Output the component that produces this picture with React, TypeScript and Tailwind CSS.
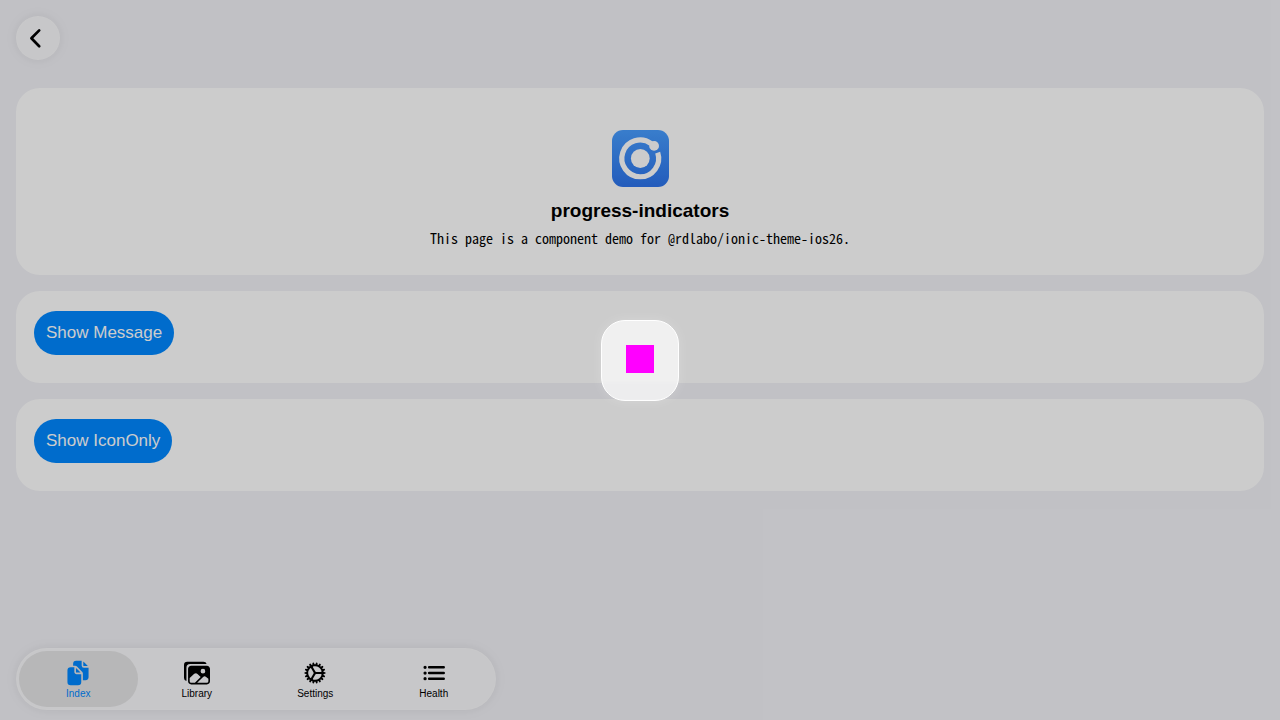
import type { ComponentType } from "react";
import { IoCog, IoDocuments, IoImages, IoList } from "react-icons/io5";

type Tab = {
  label: string;
  Icon: ComponentType<{ className?: string }>;
};

const tabs: Tab[] = [
  { label: "Index", Icon: IoDocuments },
  { label: "Library", Icon: IoImages },
  { label: "Settings", Icon: IoCog },
  { label: "Health", Icon: IoList },
];

const actions = ["Show Message", "Show IconOnly"];

function IonicLogo() {
  return (
    <svg viewBox="0 0 57 57" className="size-[57px]" role="img" aria-label="Ionic">
      <defs>
        <linearGradient id="logo-fill" x1="0" y1="0" x2="0" y2="1">
          <stop offset="0" stopColor="#479dff" />
          <stop offset="1" stopColor="#2c73eb" />
        </linearGradient>
      </defs>
      <rect width="57" height="57" rx="11" fill="url(#logo-fill)" />
      <circle cx="28.3" cy="28.5" r="9.4" fill="#fff" />
      <circle cx="42.1" cy="15.9" r="4.9" fill="#fff" />
      <path
        d="M39.2 13.6A18.4 18.4 0 1 0 45.7 22.6"
        fill="none"
        stroke="#fff"
        strokeWidth="5.2"
      />
    </svg>
  );
}

function TabBar() {
  return (
    <nav
      aria-label="Main"
      className="grid w-full max-w-[480px] grid-cols-4 rounded-full border border-white/30 bg-[#f9f9fc] p-[2px] shadow-[0_0_12px_rgba(0,0,0,0.08)]"
    >
      {tabs.map(({ label, Icon }, index) => (
        <a
          key={label}
          href={`#${label.toLowerCase()}`}
          aria-current={index === 0 ? "page" : undefined}
          className={
            index === 0
              ? "flex h-14 flex-col items-center gap-[2px] rounded-full bg-[#e5e5e6] pt-[9px] text-[#0088ff]"
              : "flex h-14 flex-col items-center gap-[2px] pt-[9px] text-black"
          }
        >
          <Icon className="size-[26px]" />
          <span className="text-[10px] leading-3">{label}</span>
        </a>
      ))}
    </nav>
  );
}

export default function App() {
  return (
    <div className="relative flex min-h-screen flex-col bg-[#f2f2f7] px-4 pt-4 pb-[10px] font-['Liberation_Sans',Arial,sans-serif] text-black">
      <header>
        <button
          type="button"
          aria-label="Back"
          className="flex size-11 items-center justify-start rounded-full border border-white/30 bg-[#f9f9fc] pl-[10px] shadow-[0_0_12px_rgba(0,0,0,0.08)]"
        >
          <svg viewBox="0 0 16 24" className="h-6 w-4" fill="none" aria-hidden="true">
            <path
              d="M12.2 4.4L4.4 12.3L12.2 20.2"
              stroke="currentColor"
              strokeWidth="2.7"
              strokeLinecap="round"
              strokeLinejoin="round"
            />
          </svg>
        </button>
      </header>

      <main className="mt-7 flex flex-col gap-4 pb-8">
        <section className="flex flex-col items-center rounded-3xl bg-white px-4 pt-[42px] pb-[26px]">
          <IonicLogo />
          <h1 className="mt-3 text-[19px] leading-6 font-bold">progress-indicators</h1>
          <p className="mt-1 text-center font-['Noto_Sans_Mono_CJK_JP','Noto_Sans_CJK_JP',monospace] text-[14px] leading-[22px]">
            This page is a component demo for @rdlabo/ionic-theme-ios26.
          </p>
        </section>
        {actions.map((label) => (
          <section key={label} className="rounded-3xl bg-white px-[18px] pt-5 pb-7">
            <button
              type="button"
              className="flex h-11 items-center rounded-full bg-[#0088ff] px-3 text-[17px] leading-5 text-white"
            >
              {label}
            </button>
          </section>
        ))}
      </main>

      <footer className="mt-auto">
        <TabBar />
      </footer>

      <div className="absolute inset-0 flex items-center justify-center bg-black/20">
        <div
          role="dialog"
          aria-label="Loading"
          className="flex h-[81px] w-[78px] items-start justify-center rounded-3xl border border-white bg-white/70 pt-6 shadow-[0_0_12px_rgba(255,255,255,0.2)] backdrop-blur-[2px]"
        >
          <div className="size-7 bg-[#ff00ff]" />
        </div>
      </div>
    </div>
  );
}
